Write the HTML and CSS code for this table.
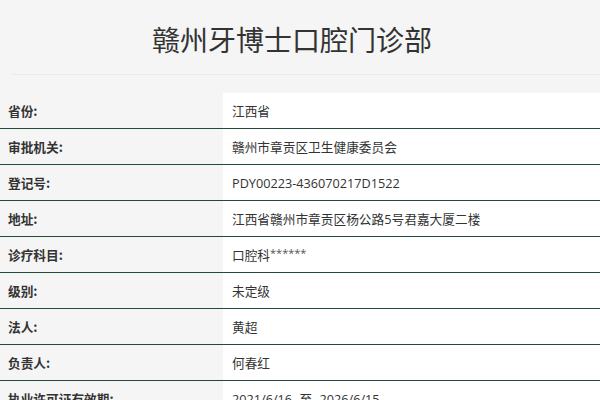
FILE: index.html
```html
<!DOCTYPE html>
<html lang="zh-CN">
<head>
<meta charset="utf-8">
<title>赣州牙博士口腔门诊部</title>
<link rel="stylesheet" href="styles.css">
</head>
<body>
<header class="header">
  <h1 class="title">赣州牙博士口腔门诊部</h1>
</header>
<div class="divider"></div>
<div class="info">
  <div class="row"><div class="label">省份:</div><div class="value">江西省</div></div>
  <div class="row"><div class="label">审批机关:</div><div class="value">赣州市章贡区卫生健康委员会</div></div>
  <div class="row"><div class="label">登记号:</div><div class="value">PDY00223-436070217D1522</div></div>
  <div class="row"><div class="label">地址:</div><div class="value">江西省赣州市章贡区杨公路5号君嘉大厦二楼</div></div>
  <div class="row"><div class="label">诊疗科目:</div><div class="value">口腔科<span class="stars">******</span></div></div>
  <div class="row"><div class="label">级别:</div><div class="value">未定级</div></div>
  <div class="row"><div class="label">法人:</div><div class="value">黄超</div></div>
  <div class="row"><div class="label">负责人:</div><div class="value">何春红</div></div>
  <div class="row"><div class="label">执业许可证有效期:</div><div class="value">2021/6/16 -至- 2026/6/15</div></div>
</div>
</body>
</html>
```
FILE: styles.css
```css
html, body {
  margin: 0;
  padding: 0;
  background: #f5f5f5;
  font-family: "Open Sans", "Noto Sans CJK SC", sans-serif;
  color: #333;
}
.header {
  height: 74px;
  display: flex;
  align-items: center;
  padding-left: 152px;
}
.title {
  margin: 0;
  font-family: "Noto Sans CJK SC", sans-serif;
  font-weight: 400;
  font-size: 28px;
  line-height: 1;
  color: #333;
  position: relative;
  top: 2px;
}
.divider {
  height: 1px;
  background: #ebebeb;
  margin-left: 12px;
}
.info {
  margin-top: 18px;
}
.row {
  display: grid;
  grid-template-columns: 223px 1fr;
  height: 35px;
  border-bottom: 1px solid #1f4d38;
}
.label {
  display: flex;
  align-items: center;
  padding-left: 8px;
  font-family: "Noto Sans CJK SC", sans-serif;
  font-weight: 700;
  font-size: 12.7px;
  color: #333;
}
.value {
  display: flex;
  align-items: center;
  padding-left: 9px;
  background: #fff;
  font-size: 12.7px;
  color: #333;
}
.stars {
  font-size: 11px;
  position: relative;
  top: -2px;
  color: #555;
}
```
